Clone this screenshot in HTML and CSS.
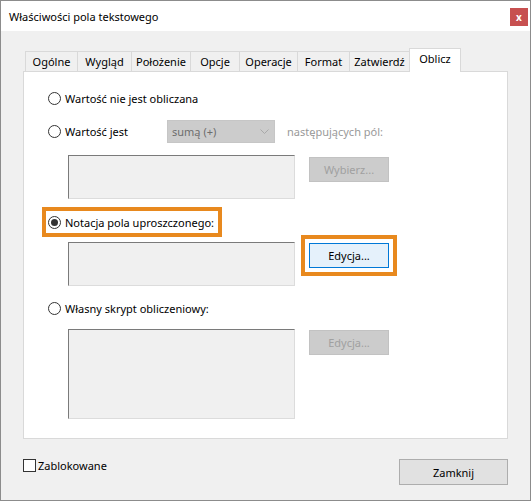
FILE: index.html
```html
<!DOCTYPE html>
<html lang="pl">
<head>
<meta charset="utf-8">
<title>Właściwości pola tekstowego</title>
<link rel="stylesheet" href="styles.css">
</head>
<body>
<div class="window">
  <div class="titlebar">
    <span class="title">Właściwości pola tekstowego</span>
    <span class="close">x</span>
  </div>
  <div class="content">
    <div class="tabs">
      <div class="tab">Ogólne</div>
      <div class="tab">Wygląd</div>
      <div class="tab">Położenie</div>
      <div class="tab">Opcje</div>
      <div class="tab">Operacje</div>
      <div class="tab">Format</div>
      <div class="tab">Zatwierdź</div>
      <div class="tab active">Oblicz</div>
    </div>
    <div class="panel">
      <div class="row radio-row r1">
        <span class="radio"></span><span>Wartość nie jest obliczana</span>
      </div>
      <div class="row radio-row r2">
        <span class="radio"></span><span class="fixed-label">Wartość jest</span>
        <div class="select">
          <span class="select-text">sumą (+)</span>
          <svg class="chevron" width="9" height="5" viewBox="0 0 9 5"><path d="M0.5 0.5 L4.5 4.5 L8.5 0.5" fill="none" stroke="#a9a9a9" stroke-width="1"/></svg>
        </div>
        <span class="muted">następujących pól:</span>
      </div>
      <div class="row field-row f1">
        <div class="listbox"></div>
        <div class="btn disabled">Wybierz...</div>
      </div>
      <div class="row radio-row r3 highlight">
        <span class="radio checked"></span><span>Notacja pola uproszczonego:</span>
      </div>
      <div class="row field-row f2">
        <div class="listbox"></div>
        <div class="btn focus">Edycja...</div>
      </div>
      <div class="row radio-row r4">
        <span class="radio"></span><span>Własny skrypt obliczeniowy:</span>
      </div>
      <div class="row field-row f3">
        <div class="listbox tall"></div>
        <div class="btn disabled">Edycja...</div>
      </div>
    </div>
  </div>
  <div class="footer">
    <div class="check"><span class="checkbox"></span><span>Zablokowane</span></div>
    <div class="btn default">Zamknij</div>
  </div>
</div>
</body>
</html>
```

FILE: styles.css
```css
html, body {
  margin: 0;
  padding: 0;
  background: #f0f0f0;
}

body {
  font-family: "Noto Sans", "Open Sans", sans-serif;
  font-size: 11px;
  color: #000;
}

.window {
  width: 531px;
  height: 501px;
  box-sizing: border-box;
  border: 1px solid #8c8c8c;
  background: #f0f0f0;
  display: flex;
  flex-direction: column;
}

.titlebar {
  height: 30px;
  flex: none;
  background: #fff;
  display: flex;
  align-items: center;
  padding-left: 8px;
}

.close {
  margin-left: auto;
  margin-right: 2px;
  align-self: flex-start;
  margin-top: 7px;
  width: 18px;
  height: 18px;
  background: #c75050;
  color: #fff;
  font-size: 10px;
  font-weight: bold;
  display: flex;
  align-items: center;
  justify-content: center;
  line-height: 1;
}

.content {
  padding: 0 22px;
  margin-top: 17px;
}

.tabs {
  display: flex;
  align-items: flex-end;
  height: 23px;
  padding-left: 2px;
}

.tab {
  box-sizing: border-box;
  height: 20px;
  border: 1px solid #d9d9d9;
  border-bottom: 0;
  margin-left: -1px;
  text-align: center;
  line-height: 19px;
  background: #f0f0f0;
  white-space: nowrap;
}

.tab:first-child { margin-left: 0; width: 53px; }
.tab:nth-child(2) { width: 55px; }
.tab:nth-child(3) { width: 60px; }
.tab:nth-child(4) { width: 50px; }
.tab:nth-child(5) { width: 59px; }
.tab:nth-child(6) { width: 53px; }
.tab:nth-child(7) { width: 61px; }
.tab:nth-child(8) { width: 52px; }

.tab.active {
  height: 24px;
  margin-bottom: -1px;
  background: #fff;
  position: relative;
  z-index: 1;
  line-height: 20px;
}

.panel {
  height: 368px;
  box-sizing: border-box;
  background: #fff;
  border: 1px solid #d9d9d9;
  display: flex;
  flex-direction: column;
}

.row {
  display: flex;
  align-items: center;
  flex: none;
}

.radio-row {
  height: 22px;
  margin-left: 22px;
}

.radio {
  width: 13px;
  height: 13px;
  box-sizing: border-box;
  border: 1px solid #333;
  border-radius: 50%;
  margin-left: 2px;
  margin-right: 4px;
  background: #fff;
  flex: none;
  display: flex;
  align-items: center;
  justify-content: center;
}

.radio.checked::after {
  content: "";
  width: 7px;
  height: 7px;
  border-radius: 50%;
  background: #333;
}

.r1 { margin-top: 15px; }
.r2 { margin-top: 11px; height: 23px; }
.f1 { margin-top: 12px; }
.r3 { margin-top: 12px; }
.f2 { margin-top: 9px; }
.r4 { margin-top: 11px; }
.f3 { margin-top: 10px; }

.highlight {
  align-self: flex-start;
  padding-right: 4px;
  outline: 4px solid #e8891e;
}

.fixed-label {
  width: 102px;
  flex: none;
}

.select {
  width: 108px;
  height: 23px;
  box-sizing: border-box;
  background: #cccccc;
  border: 1px solid #c6c6c6;
  display: flex;
  align-items: center;
  padding-left: 4px;
  padding-right: 5px;
  color: #6d6d6d;
}

.select-text {
  flex: 1;
}

.chevron {
  display: block;
}

.muted {
  margin-left: 12px;
  color: #999;
}

.field-row {
  align-items: flex-start;
  margin-left: 44px;
}

.listbox {
  width: 227px;
  height: 44px;
  box-sizing: border-box;
  background: #f0f0f0;
  border: 1px solid;
  border-color: #7a7a7a #dcdcdc #dcdcdc #7a7a7a;
  flex: none;
}

.listbox.tall {
  height: 90px;
}

.btn {
  box-sizing: border-box;
  width: 80px;
  height: 25px;
  display: flex;
  align-items: center;
  justify-content: center;
  border: 1px solid;
  flex: none;
}

.field-row .btn {
  margin-left: 14px;
  margin-top: 1px;
}

.f1 .btn {
  margin-top: 2px;
}

.btn.disabled {
  background: #cccccc;
  border-color: #c2c2c2;
  color: #a0a0a0;
}

.btn.focus {
  background: #e5f1fb;
  border-color: #0078d7;
  outline: 4px solid #e8891e;
  outline-offset: 4px;
}

.footer {
  padding: 0 22px;
  margin-top: 20px;
  display: flex;
  justify-content: space-between;
  align-items: flex-start;
}

.check {
  display: flex;
  align-items: center;
  height: 13px;
}

.checkbox {
  width: 13px;
  height: 13px;
  box-sizing: border-box;
  border: 1px solid #333;
  background: #fff;
  margin-right: 2px;
  flex: none;
}

.btn.default {
  width: 109px;
  height: 26px;
  background: #e1e1e1;
  border-color: #adadad;
}
```
